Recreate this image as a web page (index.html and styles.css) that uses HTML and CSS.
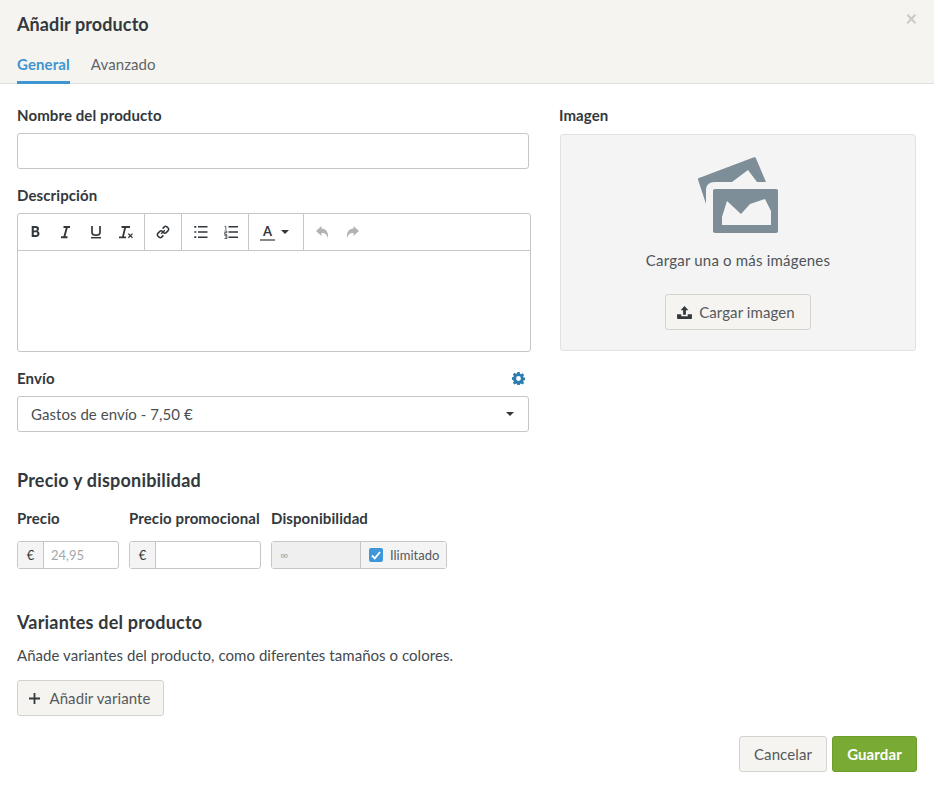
FILE: index.html
```html
<!DOCTYPE html>
<html lang="es">
<head>
<meta charset="utf-8">
<title>Añadir producto</title>
<link rel="stylesheet" href="styles.css">
</head>
<body>
<div class="modal">
  <header class="head">
    <h1 class="title">Añadir producto</h1>
    <span class="close">×</span>
    <nav class="tabs">
      <span class="tab active">General</span>
      <span class="tab">Avanzado</span>
    </nav>
  </header>
  <main class="body">
    <div class="top">
      <div class="left">
        <label class="label first">Nombre del producto</label>
        <div class="input"></div>
        <label class="label desc">Descripción</label>
        <div class="editor">
          <div class="toolbar">
            <div class="group g1">
              <svg class="ti" viewBox="0 0 14 14"><path fill-rule="evenodd" d="M2.700 1h4.100c2 0 3.200 1 3.200 2.800 0 1.100-.6 1.900-1.500 2.300 1.200.3 2 1.300 2 2.700 0 2-1.400 3.200-3.400 3.200H2.700zM4.800 2.900v2.500h1.700c.8 0 1.300-.5 1.300-1.250S7.300 2.900 6.500 2.900zm0 4.300v2.900h2c.9 0 1.500-.5 1.500-1.450S7.700 7.200 6.800 7.200z" fill="#33383c"/></svg>
              <svg class="ti" viewBox="0 0 14 14"><path d="M4.500 2h6.500M2 12.200h6.500M8 2 5.200 12.200" stroke="#33383c" stroke-width="1.900" fill="none"/></svg>
              <svg class="ti" viewBox="0 0 14 14"><path d="M3 1v6.200c0 2 1.500 3 4 3s4-1 4-3V1" stroke="#33383c" stroke-width="1.700" fill="none"/><path d="M2 12.700h10" stroke="#33383c" stroke-width="1.500"/></svg>
              <svg class="ti" viewBox="0 0 14 14"><path d="M2.500 2h8.500M0 12.300h7M6.300 2 3.800 12.300" stroke="#33383c" stroke-width="1.800" fill="none"/><path d="m9.300 8.600 4.200 4.200m0-4.200-4.200 4.200" stroke="#33383c" stroke-width="1.300"/></svg>
            </div>
            <div class="group g2">
              <svg class="ti" viewBox="0 0 14 14"><path d="m5.200 8.800 3.600-3.600M6.600 3.600l1.500-1.500a2.200 2.200 0 0 1 3.100 0l.7.7a2.200 2.200 0 0 1 0 3.100l-1.500 1.500a2.200 2.200 0 0 1-3.100 0M7.400 10.400l-1.500 1.500a2.200 2.200 0 0 1-3.100 0l-.7-.7a2.200 2.200 0 0 1 0-3.100l1.500-1.500a2.200 2.200 0 0 1 3.100 0" stroke="#33383c" stroke-width="1.500" fill="none"/></svg>
            </div>
            <div class="group g3">
              <svg class="ti" viewBox="0 0 14 14"><path d="M4 1.800h9.500M4 7h9.500M4 12.200h9.500" stroke="#33383c" stroke-width="1.500"/><path d="M.3 1.800h2M.3 7h2M.3 12.200h2" stroke="#33383c" stroke-width="1.700"/></svg>
              <svg class="ti" viewBox="0 0 14 14"><path d="M4.500 1.800H14M4.500 7H14M4.500 12.200H14" stroke="#33383c" stroke-width="1.500"/><path d="M.6 1.400h1.200v3.400M.4 6h2.400v1.600H.6v1.700h2.500M.4 10.300h2.500v3.200H.4M1 11.900h1.800" stroke="#33383c" stroke-width=".8" fill="none"/></svg>
            </div>
            <div class="group g4">
              <span class="color">A</span><span class="caret small"></span>
            </div>
            <div class="group g5">
              <svg class="ti" viewBox="0 0 14 14"><path d="M5.500 1 0 6l5.500 5V8c3-.2 5 .9 6.500 5 .6-6-2-9.300-6.500-9.500z" fill="#b1b4b6"/></svg>
              <svg class="ti" viewBox="0 0 14 14"><path d="m7.500 1 5.500 5-5.500 5V8c-3-.2-5 .9-6.500 5-.6-6 2-9.300 6.500-9.500z" fill="#b1b4b6"/></svg>
            </div>
          </div>
          <div class="area"></div>
        </div>
        <div class="label-row">
          <label class="label">Envío</label>
          <svg class="gear" viewBox="0 0 14 14"><path fill-rule="evenodd" d="M5.700 0h2.600l.3 1.900 1.100.5 1.600-1.100 1.800 1.800-1.100 1.600.5 1.100 1.900.3v2.600l-1.900.3-.5 1.100 1.100 1.600-1.800 1.800-1.600-1.100-1.100.5-.3 1.900H5.700l-.3-1.900-1.100-.5-1.600 1.100-1.800-1.800 1.100-1.600-.5-1.100L0 8.300V5.700l1.500-.3.500-1.100L.9 2.700l1.800-1.800 1.600 1.100 1.100-.5zM7 4.400a2.600 2.600 0 1 0 0 5.200 2.600 2.600 0 0 0 0-5.200z" fill="#2c7cb0"/></svg>
        </div>
        <div class="select"><span>Gastos de envío - 7,50 €</span><span class="caret"></span></div>
      </div>
      <div class="right">
        <label class="label first">Imagen</label>
        <div class="drop">
          <svg class="pic" viewBox="698 157 81 77"><path fill="#7e8e98" d="M699 178 754 157.300c.8-.3 1.500 0 1.800.8L766 182h-9l-9-12-16 12h-17c-6 0-9 3-9 8v14l-8-24.500c-.3-.7 0-1.200 1-1.500z"/><path fill="#7e8e98" fill-rule="evenodd" d="M715 189h61c1.300 0 2 .7 2 2v40c0 1.300-.7 2-2 2h-61c-1.300 0-2-.7-2-2v-40c0-1.300.7-2 2-2zm7 36h49v-14l-6-12-15 5-9 10-14-13-5 16z"/></svg>
          <p class="hint">Cargar una o más imágenes</p>
          <button class="btn upload"><svg class="up" viewBox="0 0 16 14"><path d="M8 0 3.800 4.500h2.700v5h3v-5h2.700zM0 9h4.500v2h7V9H16v4.200c0 .5-.3.800-.8.800H.8c-.5 0-.8-.3-.8-.8z" fill="#33383c"/></svg>Cargar imagen</button>
        </div>
      </div>
    </div>
    <h2 class="section price-h">Precio y disponibilidad</h2>
    <div class="prices">
      <div class="pf p1">
        <label class="label">Precio</label>
        <div class="ig"><span class="addon">€</span><span class="val">24,95</span></div>
      </div>
      <div class="pf p2">
        <label class="label">Precio promocional</label>
        <div class="ig"><span class="addon">€</span><span class="val"></span></div>
      </div>
      <div class="pf p3">
        <label class="label">Disponibilidad</label>
        <div class="ig"><span class="val inf">∞</span><span class="lim"><span class="check"><svg viewBox="0 0 14 14"><path d="m3 7.500 2.800 2.800L11 4" stroke="#fff" stroke-width="1.800" fill="none"/></svg></span>Ilimitado</span></div>
      </div>
    </div>
    <h2 class="section var-h">Variantes del producto</h2>
    <p class="para">Añade variantes del producto, como diferentes tamaños o colores.</p>
    <button class="btn add"><svg class="plus" viewBox="0 0 11 11"><path d="M5.500 0v11M0 5.500h11" stroke="#33383c" stroke-width="1.800"/></svg>Añadir variante</button>
    <div class="foot">
      <button class="btn cancel">Cancelar</button>
      <button class="btn save">Guardar</button>
    </div>
  </main>
</div>
</body>
</html>
```
FILE: styles.css
```css
* { box-sizing: border-box; }
html, body { margin: 0; padding: 0; background: #fff; }
body { font-family: Lato, "Open Sans", sans-serif; color: #33383c; font-size: 15px; height: 787px; overflow: hidden; }
.modal { width: 934px; }
.head { position: relative; height: 84px; background: #f5f4f0; border-bottom: 1px solid #dfe1e1; padding: 13px 17px 0; }
.title { margin: 0; font-size: 18px; line-height: 22px; font-weight: 700; letter-spacing: .1px; }
.close { position: absolute; top: 8px; right: 17px; font-size: 20px; line-height: 20px; font-weight: 700; color: #c9c9c7; }
.tabs { display: flex; gap: 21px; margin-top: 18px; }
.tab { height: 31px; line-height: 22px; font-size: 15px; color: #5f6468; letter-spacing: .1px; }
.tab.active { color: #4095d0; font-weight: 700; border-bottom: 3px solid #4095d0; }
.body { padding: 0 17px; position: relative; }
.top { display: flex; }
.left { width: 514px; }
.right { width: 357px; margin-left: 28px; }
.label { display: block; font-size: 15px; line-height: 18px; font-weight: 700; letter-spacing: .1px; }
.label.first { margin-top: 22px; }
.label.desc { margin-top: 17px; }
.input { width: 512px; height: 36px; margin-top: 9px; border: 1px solid #c6c6c6; border-radius: 3px; }
.editor { margin-top: 9px; height: 139px; border: 1px solid #c6c6c6; border-radius: 3px; }
.toolbar { display: flex; height: 37px; border-bottom: 1px solid #c6c6c6; }
.group { display: flex; align-items: center; border-right: 1px solid #c6c6c6; }
.g1 { width: 127px; padding-left: 11px; gap: 16px; }
.g2 { width: 37px; justify-content: center; }
.g3 { width: 67px; padding-left: 12px; gap: 16px; }
.g4 { width: 55px; padding-left: 11px; }
.g5 { padding-left: 12px; padding-right: 12px; gap: 16px; border-right: 0; }
.ti { width: 14px; height: 14px; flex: none; }
.color { width: 15px; font-size: 13px; font-weight: 700; line-height: 15px; text-align: center; border-bottom: 2px solid #888; }
.caret { width: 0; height: 0; border: 4.500px solid transparent; border-top-color: #33383c; border-bottom-width: 0; }
.caret.small { margin-left: 6px; border-width: 4px 4px 0; border-top-color: #33383c; }
.label-row { display: flex; justify-content: space-between; align-items: center; margin-top: 17px; padding-right: 4px; width: 512px; }
.gear { width: 13px; height: 13px; }
.select { display: flex; justify-content: space-between; align-items: center; width: 512px; height: 36px; margin-top: 9px; padding: 0 14px 0 13px; border: 1px solid #c6c6c6; border-radius: 3px; font-size: 15px; color: #4a4f53; letter-spacing: .05px; }
.drop { display: flex; flex-direction: column; align-items: center; width: 356px; height: 217px; margin-top: 10px; margin-left: 1px; background: #f4f4f4; border: 1px solid #e2e2e2; border-radius: 3px; }
.pic { width: 81px; height: 77px; margin-top: 22px; }
.hint { margin: 17px 0 0; font-size: 15px; line-height: 18px; color: #4f5458; letter-spacing: .2px; }
.btn { display: flex; align-items: center; justify-content: center; height: 36px; padding: 0; font-family: inherit; font-size: 15px; color: #55595c; background: #f5f4f0; border: 1px solid #d4d3cd; border-radius: 3px; letter-spacing: .1px; }
.upload { width: 146px; margin-top: 25px; padding-right: 4px; }
.up { width: 15px; height: 13px; margin-right: 7px; }
.section { margin: 0; font-size: 18px; line-height: 22px; font-weight: 700; letter-spacing: .2px; }
.price-h { margin-top: 37px; }
.prices { display: flex; margin-top: 18px; }
.pf .label { white-space: nowrap; }
.p1 { width: 112px; }
.p2 { width: 142px; }
.p3 { width: 176px; }
.ig { display: flex; height: 28px; margin-top: 14px; border: 1px solid #c6c6c6; border-radius: 3px; font-size: 13px; }
.p1 .ig { width: 102px; }
.p2 .ig { width: 132px; }
.addon { width: 26px; display: flex; align-items: center; justify-content: center; background: #f4f4f4; border-right: 1px solid #c6c6c6; font-size: 13px; }
.val { flex: 1; line-height: 26px; padding-left: 7px; color: #a5a8aa; }
.inf { padding-left: 8px; background: #efefef; border-right: 1px solid #c6c6c6; font-size: 11px; }
.lim { display: flex; align-items: center; width: 85px; padding-left: 8px; background: #f4f4f4; color: #55595c; font-size: 13px; }
.check { width: 14px; height: 14px; margin-right: 7px; background: #3d97d9; border-radius: 2px; flex: none; }
.check svg { display: block; }
.var-h { margin-top: 42px; }
.para { margin: 13px 0 0; line-height: 18px; font-size: 15px; color: #44494d; letter-spacing: .05px; }
.add { width: 147px; margin-top: 16px; padding-right: 1px; }
.plus { width: 11px; height: 11px; margin-right: 9px; }
.foot { display: flex; justify-content: flex-end; gap: 5px; margin-top: 20px; width: 900px; }
.cancel { width: 88px; }
.save { width: 85px; color: #fff; font-weight: 700; background: #79ab34; border-color: #6c9c2c; }
```
